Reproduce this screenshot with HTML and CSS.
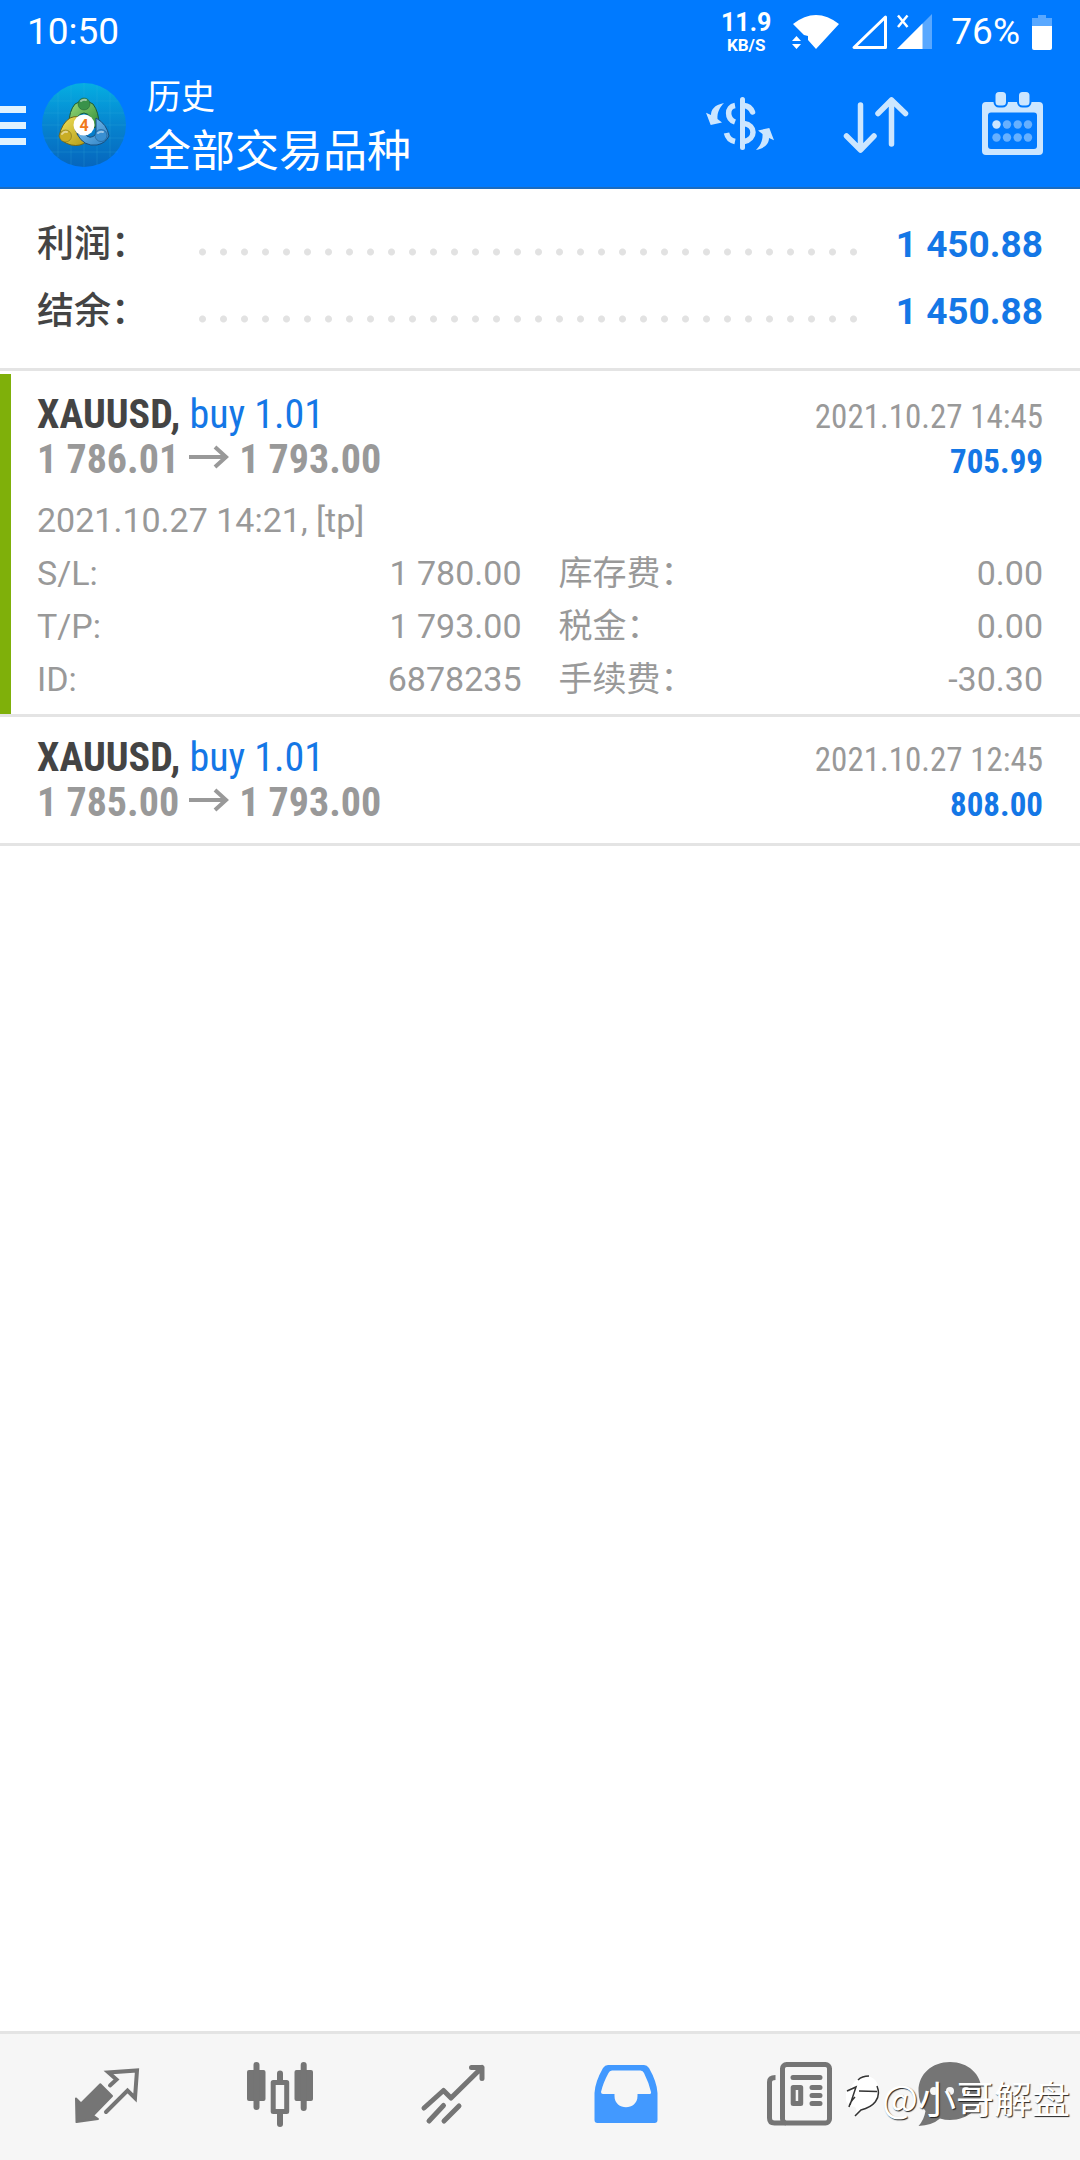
FILE: index.html
```
<!DOCTYPE html>
<html lang="zh-CN">
<head>
<meta charset="utf-8">
<meta name="viewport" content="width=device-width, initial-scale=1">
<title>历史</title>
<link rel="stylesheet" href="styles.css">
</head>
<body>
<header class="header">
  <div class="status">
    <span class="clock">10:50</span>
    <div class="speed"><span class="speed-value">11.9</span><span class="speed-unit">KB/S</span></div>
    <svg class="wifi" width="49" height="38" viewBox="0 0 49 38" aria-hidden="true">
      <path fill="#fff" d="M2 11Q25-7 48 11L25 36L17 27V23L13 22Z"/>
      <path fill="#fff" d="M1 28L5.500 23L10 28ZM1 31L5.500 36L10 31Z"/>
    </svg>
    <svg class="signal" width="81" height="38" viewBox="0 0 81 38" aria-hidden="true">
      <path fill="none" stroke="#fff" stroke-width="3" stroke-linejoin="round" d="M3 34.500H34.500V4Z"/>
      <path fill="#fff" opacity=".35" d="M81 1V36H46Z"/>
      <path fill="#fff" d="M71.500 10.500V36H46Z"/>
      <path fill="none" stroke="#fff" stroke-width="2.500" d="M47 2.500L56.500 14M56.500 2.500L47 14"/>
    </svg>
    <span class="percent">76%</span>
    <svg width="20" height="36" viewBox="0 0 20 36" aria-hidden="true">
      <path fill="#fff" opacity=".35" d="M6 1H14V4H20V12H0V4H6Z"/>
      <path fill="#fff" d="M0 12H20V34Q20 36 18 36H2Q0 36 0 34Z"/>
    </svg>
  </div>
  <div class="toolbar">
    <button class="menu" type="button" aria-label="菜单"><i></i><i></i><i></i></button>
    <svg class="logo" width="84" height="84" viewBox="0 0 84 84" aria-hidden="true">
      <defs>
        <linearGradient id="sky" x1="0" y1="0" x2="0" y2="1"><stop offset="0" stop-color="#05aee2"/><stop offset=".5" stop-color="#0684cf"/><stop offset="1" stop-color="#0666bd"/></linearGradient>
        <linearGradient id="green" x1="0" y1="0" x2="1" y2="1"><stop offset="0" stop-color="#9ddc7a"/><stop offset="1" stop-color="#2d8a35"/></linearGradient>
        <linearGradient id="gold" x1="0" y1="0" x2="1" y2="1"><stop offset="0" stop-color="#f3e35c"/><stop offset="1" stop-color="#b39a17"/></linearGradient>
        <linearGradient id="blue" x1="0" y1="0" x2="1" y2="1"><stop offset="0" stop-color="#8ccbf3"/><stop offset="1" stop-color="#2a7fc4"/></linearGradient>
      </defs>
      <circle cx="42" cy="42" r="42" fill="url(#sky)"/>
      <path stroke="#3fb3e0" stroke-opacity=".2" fill="none" d="M16 10V74M29 2V82M42 0V84M55 2V82M68 10V74M8 18H76M2 30H82M0 42H84M2 55H82M8 69H76"/>
      <g stroke-linejoin="round">
        <path fill="url(#green)" stroke="#1d5c35" d="M33 21Q42 15 51 21Q57 29 57 42L50 46Q51 31 42 30Q33 31 34 44L27 41Q27 28 33 21Z"/>
        <path fill="url(#gold)" stroke="#6d651b" d="M28 35Q37 31 40 38L33 41Q31 52 45 58Q39 64 29 62Q19 59 17 53Q20 40 28 35Z"/>
        <path fill="url(#blue)" stroke="#174e7d" d="M54 35Q65 41 67 53Q64 60 55 62Q42 64 35 51L42 50Q48 58 54 51Z"/>
        <circle cx="42" cy="21" r="6" fill="#39924a" stroke="#1d5c35" stroke-opacity=".5"/>
        <circle cx="23.500" cy="53" r="6" fill="#c9ad25" stroke="#6d651b" stroke-opacity=".5"/>
        <circle cx="59" cy="52.500" r="6" fill="#398fd2" stroke="#174e7d" stroke-opacity=".5"/>
        <path fill="none" stroke="#fff" stroke-opacity=".5" stroke-width="2" stroke-linecap="round" d="M39 18Q41 16 44 17M20 51Q22 48 25 49M56 50Q58 48 61 49"/>
      </g>
      <circle cx="42" cy="42" r="10.500" fill="#fff"/>
      <text class="logo-digit" x="42" y="48" text-anchor="middle">4</text>
    </svg>
    <div class="heading">
      <h1 class="heading-section">历史</h1>
      <p class="heading-filter">全部交易品种</p>
    </div>
    <div class="actions">
      <button class="action" type="button" aria-label="货币">
        <svg width="70" height="70" viewBox="0 0 70 70" fill="none" stroke="#cce6ff" stroke-width="5">
          <path stroke-linecap="round" d="M37.500 9.500V57.500"/>
          <path stroke-width="5.500" d="M30 15.500C21.500 17 21.500 29 30 32M21.500 43Q23 50 30 51.500"/>
          <path stroke-width="5.500" stroke-linecap="round" d="M39 15.500Q45 16 47.500 22M39 33.500C51 35 51 49 39 51.500"/>
          <g fill="#cce6ff" stroke="none">
            <path id="swap" d="M19 13C9 15 6 20 6 25L1 22.700L5.700 35L17 32.500L12.500 29C12 22 15 17 19 13Z"/>
            <use href="#swap" transform="rotate(180 35 36.500)"/>
          </g>
        </svg>
      </button>
      <button class="action" type="button" aria-label="排序">
        <svg width="70" height="70" viewBox="0 0 70 70" fill="none" stroke="#cce6ff" stroke-width="5.500" stroke-linecap="round" stroke-linejoin="round">
          <path d="M19.500 15V59M5.500 46L19.500 60L33 46M50.500 54V10M37 23.500L50.500 10L64.500 23.500"/>
        </svg>
      </button>
      <button class="action" type="button" aria-label="日期">
        <svg width="70" height="70" viewBox="0 0 70 70">
          <path fill="#cce6ff" fill-rule="evenodd" d="M9 12H62Q66 12 66 16V61Q66 65 62 65H9Q5 65 5 61V16Q5 12 9 12ZM14 22.500Q11 22.500 11 25.500V56Q11 59 14 59H57Q60 59 60 56V25.500Q60 22.500 57 22.500Z"/>
          <g fill="#cce6ff" stroke="#007aff" stroke-width="2"><rect x="17.500" y="1" width="12.500" height="15.500" rx="4.500"/><rect x="41" y="1" width="12.500" height="15.500" rx="4.500"/></g>
          <circle cx="19.500" cy="34.500" r="4.200" fill="#cce6ff"/>
          <g fill="#66b0ff"><circle cx="30" cy="34.500" r="4.200"/><circle cx="40.700" cy="34.500" r="4.200"/><circle cx="51" cy="34.500" r="4.200"/><circle cx="19.500" cy="47.500" r="4.200"/><circle cx="30" cy="47.500" r="4.200"/><circle cx="40.700" cy="47.500" r="4.200"/><circle cx="51" cy="47.500" r="4.200"/></g>
        </svg>
      </button>
    </div>
  </div>
</header>

<main class="content">
  <dl class="summary">
    <div class="summary-row"><dt class="summary-label">利润：</dt><dd class="dots" aria-hidden="true"></dd><dd class="summary-value">1 450.88</dd></div>
    <div class="summary-row"><dt class="summary-label">结余：</dt><dd class="dots" aria-hidden="true"></dd><dd class="summary-value">1 450.88</dd></div>
  </dl>

  <ul class="deals">
    <li class="deal deal-open">
      <div class="deal-line"><span class="symbol">XAUUSD, <span class="side">buy 1.01</span></span><time class="closed">2021.10.27 14:45</time></div>
      <div class="deal-line">
        <span class="prices">1 786.01<svg class="arrow" width="42" height="24" viewBox="0 0 42 24" aria-label="至"><path fill="none" stroke="#999" stroke-width="4" d="M1 12H38M27 2L38 12L27 22"/></svg>1 793.00</span>
        <span class="profit">705.99</span>
      </div>
      <div class="details">
        <p class="comment">2021.10.27 14:21, [tp]</p>
        <dl class="fields">
          <div class="field"><dt>S/L:</dt><dd>1 780.00</dd></div>
          <div class="field"><dt>库存费：</dt><dd>0.00</dd></div>
          <div class="field"><dt>T/P:</dt><dd>1 793.00</dd></div>
          <div class="field"><dt>税金：</dt><dd>0.00</dd></div>
          <div class="field"><dt>ID:</dt><dd>6878235</dd></div>
          <div class="field"><dt>手续费：</dt><dd>-30.30</dd></div>
        </dl>
      </div>
    </li>
    <li class="deal">
      <div class="deal-line"><span class="symbol">XAUUSD, <span class="side">buy 1.01</span></span><time class="closed">2021.10.27 12:45</time></div>
      <div class="deal-line">
        <span class="prices">1 785.00<svg class="arrow" width="42" height="24" viewBox="0 0 42 24" aria-label="至"><path fill="none" stroke="#999" stroke-width="4" d="M1 12H38M27 2L38 12L27 22"/></svg>1 793.00</span>
        <span class="profit">808.00</span>
      </div>
    </li>
  </ul>
</main>

<nav class="tabs">
  <a class="tab" href="#quotes" aria-label="行情">
    <svg width="70" height="70" viewBox="0 0 70 70">
      <path fill="#757575" stroke="#757575" stroke-width="2" stroke-linejoin="round" d="M4 38.500L9 43.500L28.300 24.300L40 36L21 55.500L26 59L4.500 62Z"/>
      <path fill="none" stroke="#757575" stroke-width="4" stroke-linecap="round" d="M38 25.500L44.500 19.500L36.500 12.500L65 10.500L63 38L55.500 30.500L34 52"/>
    </svg>
  </a>
  <a class="tab" href="#charts" aria-label="图表">
    <svg width="70" height="70" viewBox="0 0 70 70" fill="#757575">
      <rect x="2" y="10" width="18.500" height="31" rx="2"/><rect x="8.500" y="2" width="6" height="48" rx="3"/>
      <rect x="49.500" y="10" width="18.500" height="31" rx="2"/><rect x="55.700" y="2" width="6" height="49" rx="3"/>
      <rect x="32" y="10.500" width="6" height="12" rx="3"/><rect x="32" y="50" width="6" height="17" rx="3"/>
      <rect x="28.200" y="22.500" width="13.500" height="29" fill="#f6f6f6" stroke="#757575" stroke-width="5" stroke-linejoin="round"/>
    </svg>
  </a>
  <a class="tab" href="#trade" aria-label="交易">
    <svg width="70" height="70" viewBox="0 0 70 70" fill="none" stroke="#757575" stroke-width="5" stroke-linecap="round" stroke-linejoin="round">
      <path d="M6 48L25.500 30.500L33 38L64 7.500M53.500 7.500H64V18.500M25.500 45.500L11 61M41 46L26 61"/>
    </svg>
  </a>
  <a class="tab" href="#history" aria-label="历史" aria-current="page">
    <svg width="70" height="70" viewBox="0 0 70 70">
      <path fill="#4299ff" fill-rule="evenodd" d="M17 5H53Q56 5 58 8Q66 22 66.500 33V60Q66.500 63 63.500 63H6.500Q3.500 63 3.500 60V33Q4 22 12 8Q14 5 17 5ZM21 10.500Q18.500 10.500 17.500 13Q12 23 10 32Q10 34 12 34H23.500V36C23.500 51 46.500 51 46.500 36V34H58Q60.500 34 60 32Q58 23 53 13Q52 10.500 49.500 10.500Z"/>
    </svg>
  </a>
  <a class="tab" href="#news" aria-label="新闻">
    <svg width="70" height="70" viewBox="0 0 70 70" fill="none" stroke="#757575" stroke-width="5" stroke-linecap="round">
      <path stroke-linecap="butt" d="M11.500 17.500Q5.500 17.500 5.500 22V58Q5.500 63 10.500 63H22"/>
      <rect x="18.500" y="4.500" width="47" height="58.500" rx="4"/>
      <path d="M29 17.500H56M48 27.500H56M48 35.500H56M48 43.500H56"/>
      <rect x="29.200" y="27.500" width="7.500" height="16" stroke-linejoin="round"/>
    </svg>
  </a>
  <a class="tab" href="#chat" aria-label="消息">
    <svg width="70" height="70" viewBox="0 0 70 70">
      <path fill="#757575" d="M35 2C53 2 66.500 14 66.500 31C66.500 48 53 60 35 60Q30 60 25 58.500Q17 65.500 3.500 66Q9 60 10.500 51Q3.500 43 3.500 31C3.500 14 17 2 35 2Z"/>
      <g fill="#f6f6f6"><circle cx="19" cy="31" r="4"/><circle cx="35" cy="31" r="4"/><circle cx="51" cy="31" r="4"/></g>
    </svg>
  </a>
  <div class="watermark">
    <svg width="34" height="46" viewBox="0 0 34 46" aria-hidden="true">
      <path fill="#fff" d="M4 18C6 6 14 2 20 2C40 4 34 32 16 36L9 43Q12 36 9 33Q-3 32 0 18Z"/>
      <path fill="none" stroke="#333" stroke-width="1.500" d="M12 6Q16 2 23 2M13 17L31 17.500M1 17L10 13Q8 19 4 31M9 23Q4 28 3 33M31 12C36 25 27 33 15 36L9 42"/>
    </svg>
    <span>@小哥解盘</span>
  </div>
</nav>
</body>
</html>
```
FILE: styles.css
```
* { box-sizing: border-box; margin: 0; padding: 0; }

body {
  min-height: 100vh;
  display: flex;
  flex-direction: column;
  background: #fff;
  color: #999;
  font-family: Roboto, "Noto Sans CJK SC", sans-serif;
}

svg { display: block; flex: none; }
button { border: 0; background: none; }

/* Header */
.header {
  background: #007aff;
  border-bottom: 2px solid #1b6cc0;
  color: #fff;
}
.status {
  display: flex;
  align-items: center;
  height: 63px;
  padding: 0 28px 0 27px;
  font-size: 37px;
}
.clock { margin-right: auto; }
.speed {
  display: flex;
  flex-direction: column;
  align-items: center;
  font-weight: 700;
}
.speed-value { font-size: 25px; line-height: 26px; }
.speed-unit { font-size: 17px; line-height: 18px; }
.wifi { margin-left: 20px; }
.signal { margin-left: 11px; }
.percent { margin: 0 12px 0 19px; }

.toolbar {
  display: flex;
  align-items: center;
  height: 124px;
  padding-right: 33px;
}
.menu {
  display: flex;
  flex-direction: column;
  gap: 9px;
  width: 26px;
}
.menu i { height: 7px; background: #e0f3ff; }
.logo { margin-left: 16px; }
.logo-digit { font-size: 16px; font-weight: 700; fill: #f07a1c; }
.heading {
  margin-left: 21px;
  font-family: "Noto Sans CJK SC", sans-serif;
}
.heading-section { font-size: 34px; font-weight: 400; line-height: 46px; }
.heading-filter { font-size: 44px; line-height: 60px; }
.actions { display: flex; gap: 66px; margin-left: auto; }

/* Totals */
.content { flex: 1; }
.summary {
  padding: 18px 37px 27px;
  border-bottom: 3px solid #e4e4e4;
  font-size: 37px;
  line-height: 68px;
}
.summary-row { display: flex; align-items: baseline; height: 67px; }
.summary-label {
  width: 155px;
  color: #444;
  font-family: "Noto Sans CJK SC", sans-serif;
  font-weight: 500;
}
.dots {
  flex: 1;
  height: 10px;
  background: radial-gradient(circle, #e2e2e2 3px, transparent 4px) 0 0 / 21px 10px;
}
.summary-value {
  width: 179px;
  color: #1477e6;
  font-weight: 700;
  text-align: right;
}

/* Deals */
.deals { list-style: none; margin-top: 3px; }
.deal { padding: 18px 37px; border-bottom: 3px solid #e4e4e4; }
.deal-open { padding-bottom: 8px; box-shadow: inset 11px 0 #7fb00a; }
.deal-line {
  display: flex;
  justify-content: space-between;
  align-items: baseline;
  height: 45px;
  font-family: "Roboto Condensed", Roboto, sans-serif;
  font-size: 40px;
  line-height: 46px;
}
.symbol { color: #444; font-weight: 700; }
.side { color: #1477e6; font-weight: 400; }
.closed { font-size: 33px; }
.prices { font-weight: 700; }
.arrow { display: inline-block; margin: 0 9px 4px; }
.profit { color: #1477e6; font-size: 33px; font-weight: 700; }

.details { margin-top: 12px; font-size: 34px; line-height: 53px; }
.fields {
  display: grid;
  grid-template-columns: 1fr 1fr;
  column-gap: 37px;
}
.field { display: flex; justify-content: space-between; }

/* Bottom tabs */
.tabs {
  position: relative;
  display: grid;
  grid-template-columns: 173fr 173fr 173fr 173fr 173fr 129fr;
  align-items: center;
  height: 129px;
  padding: 0 66px 4px 20px;
  border-top: 3px solid #e4e4e4;
  background: #f6f6f6;
}
.tab { display: flex; justify-content: center; }

.watermark {
  position: absolute;
  right: 10px;
  bottom: 40px;
  display: flex;
  align-items: center;
  gap: 2px;
  color: #fff;
  font-family: "Noto Sans CJK SC", sans-serif;
  font-size: 38px;
  line-height: 46px;
  text-shadow: 1px 1px 1px #222;
}
```
